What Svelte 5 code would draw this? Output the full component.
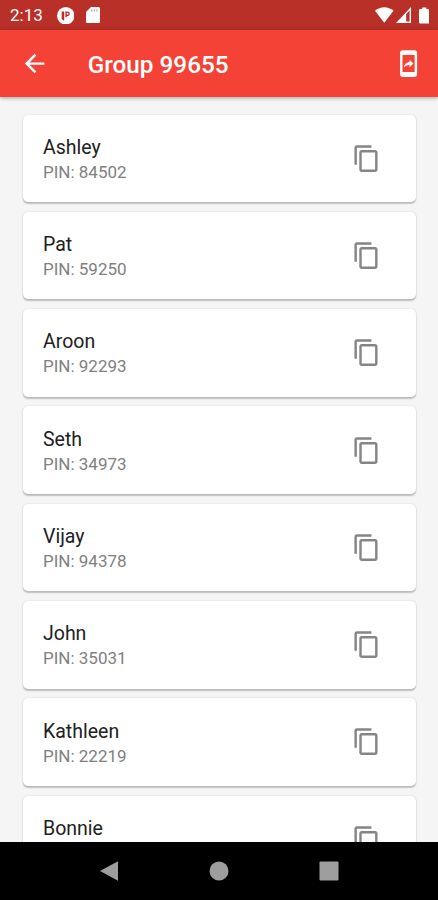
<script lang="ts">
  interface Member {
    name: string;
    pin: string;
  }

  let groupId = '99655';

  let members: Member[] = [
    { name: 'Ashley', pin: '84502' },
    { name: 'Pat', pin: '59250' },
    { name: 'Aroon', pin: '92293' },
    { name: 'Seth', pin: '34973' },
    { name: 'Vijay', pin: '94378' },
    { name: 'John', pin: '35031' },
    { name: 'Kathleen', pin: '22219' },
    { name: 'Bonnie', pin: '' }
  ];

  function copyPin(member: Member) {
    navigator.clipboard?.writeText(member.pin);
  }
</script>

<div class="screen">
  <div class="status-bar">
    <span class="clock">2:13</span>
    <svg class="notification" viewBox="0 0 18 18">
      <circle cx="9" cy="9" r="9" fill="#fff" />
      <path d="M4.800 4.500h2.600v9.500Q5.500 13.500 4.800 12z" fill="#b93029" />
      <path d="M9.300 10.500V5.300h1.500a1.700 1.700 0 0 1 0 3.400H9.300" fill="none" stroke="#b93029" stroke-width="1.400" />
    </svg>
    <svg class="sd-card" viewBox="0 0 14 16">
      <path d="M5 0h7.500Q14 0 14 1.500v13q0 1.500-1.500 1.500h-11Q0 16 0 14.500V5z" fill="#fff" />
      <path d="M5 2.400h1.300v2.200H5zM7.700 2.400H9v2.200H7.700zM10.400 2.400h1.300v2.200h-1.300z" fill="#d98f8b" />
    </svg>
    <span class="spacer"></span>
    <svg class="wifi" viewBox="0 0 19 16">
      <path d="M9.500 16 0 3.700Q4.200 0 9.500 0T19 3.700z" fill="#fff" />
    </svg>
    <svg class="signal" viewBox="0 0 15 16">
      <path d="M15 0v16H0z" fill="#fff" />
      <path d="M10.200 7 13.600 3.400v11.200h-3.400z" fill="#b93029" />
    </svg>
    <svg class="battery" viewBox="0 0 11 17">
      <path d="M3.300 0h4.400v1.700h2Q11 1.700 11 3v12.700q0 1.300-1.300 1.300H1.300Q0 17 0 15.700V3q0-1.300 1.300-1.300h2z" fill="#fff" />
    </svg>
  </div>

  <header class="app-bar">
    <button class="icon-btn" aria-label="Back">
      <svg viewBox="0 0 24 24"><path d="M20 11H7.830l5.590-5.590L12 4l-8 8 8 8 1.410-1.410L7.830 13H20v-2z" /></svg>
    </button>
    <h1>Group {groupId}</h1>
    <button class="icon-btn" aria-label="Share">
      <svg viewBox="0 0 24 24">
        <path d="M17 1H7c-1.100 0-1.990.9-1.990 2v18c0 1.100.89 2 1.990 2h10c1.100 0 2-.9 2-2V3c0-1.100-.9-2-2-2zm0 18H7V5h10v14zm-4.200-5.780v1.750l3.200-2.990L12.800 9v1.700c-3.110.43-4.350 2.560-4.800 4.700 1.110-1.500 2.580-2.180 4.800-2.180z" />
      </svg>
    </button>
  </header>

  <main class="list">
    {#each members as member}
      <div class="card">
        <div class="info">
          <div class="name">{member.name}</div>
          {#if member.pin}
            <div class="pin">PIN: {member.pin}</div>
          {/if}
        </div>
        <button class="icon-btn copy" aria-label="Copy PIN" on:click={() => copyPin(member)}>
          <svg viewBox="0 0 24 24">
            <path d="M16 1H4c-1.100 0-2 .9-2 2v14h2V3h12V1zm3 4H8c-1.100 0-2 .9-2 2v14c0 1.100.9 2 2 2h11c1.100 0 2-.9 2-2V7c0-1.100-.9-2-2-2zm0 16H8V7h11v14z" />
          </svg>
        </button>
      </div>
    {/each}
  </main>

  <nav class="nav-bar">
    <svg viewBox="0 0 20 20"><path d="M18 0.300v19.400L0 10z" /></svg>
    <svg viewBox="0 0 20 20"><circle cx="10" cy="10" r="9.500" /></svg>
    <svg viewBox="0 0 20 20"><rect x="0.500" y="0.500" width="19" height="19" rx="1" /></svg>
  </nav>
</div>

<style>
  :global(body) {
    margin: 0;
  }

  .screen {
    display: flex;
    flex-direction: column;
    width: 438px;
    height: 900px;
    overflow: hidden;
    background: #f5f5f5;
    font-family: Roboto, sans-serif;
  }

  svg {
    display: block;
    flex: none;
  }

  .status-bar {
    display: flex;
    align-items: center;
    flex: none;
    box-sizing: border-box;
    height: 29.500px;
    padding: 1px 9px 0 10px;
    background: #b93029;
    color: #fff;
  }

  .clock {
    width: 46.500px;
    font-size: 17px;
    line-height: 28px;
  }

  .notification {
    width: 17.500px;
    height: 17.500px;
  }

  .sd-card {
    width: 14px;
    height: 16px;
    margin-left: 11.500px;
  }

  .spacer {
    flex: 1;
  }

  .wifi {
    width: 18.500px;
    height: 16px;
  }

  .signal {
    width: 15px;
    height: 16px;
    margin-left: 2px;
  }

  .battery {
    width: 10.500px;
    height: 17px;
    margin-left: 8px;
  }

  .app-bar {
    display: flex;
    align-items: center;
    flex: none;
    box-sizing: border-box;
    height: 67.900px;
    padding: 0 15px 0 20px;
    background: #f44336;
    color: #fff;
    box-shadow: 0 1px 4px rgba(0, 0, 0, 0.35);
    z-index: 1;
  }

  h1 {
    flex: 1;
    margin: 0 0 0 38.500px;
    padding-top: 3px;
    font-size: 24.300px;
    font-weight: 500;
    line-height: 30px;
  }

  .icon-btn {
    flex: none;
    padding: 0;
    border: none;
    background: none;
    color: inherit;
    cursor: pointer;
  }

  .icon-btn svg {
    width: 29.200px;
    height: 29.200px;
    fill: currentColor;
  }

  .list {
    display: flex;
    flex-direction: column;
    flex: 1;
    gap: 9.700px;
    min-height: 0;
    box-sizing: border-box;
    padding: 17.200px 22.500px 0 23px;
    overflow: hidden;
  }

  .card {
    display: flex;
    align-items: center;
    justify-content: space-between;
    flex: none;
    box-sizing: border-box;
    height: 87.600px;
    padding: 0 34px 0 20px;
    border-radius: 5px;
    background: #fff;
    box-shadow: 0 1.500px 1.500px rgba(0, 0, 0, 0.22), 0 0 2px rgba(0, 0, 0, 0.12);
  }

  .info {
    height: 49px;
  }

  .name {
    color: #212121;
    font-size: 19.500px;
    line-height: 27px;
  }

  .pin {
    color: #808080;
    font-size: 17px;
    line-height: 22px;
  }

  .copy {
    color: #858585;
  }

  .nav-bar {
    display: flex;
    align-items: center;
    justify-content: center;
    flex: none;
    gap: 89.500px;
    height: 58px;
    background: #000;
  }

  .nav-bar svg {
    width: 20px;
    height: 20px;
    fill: #9e9e9e;
  }
</style>
